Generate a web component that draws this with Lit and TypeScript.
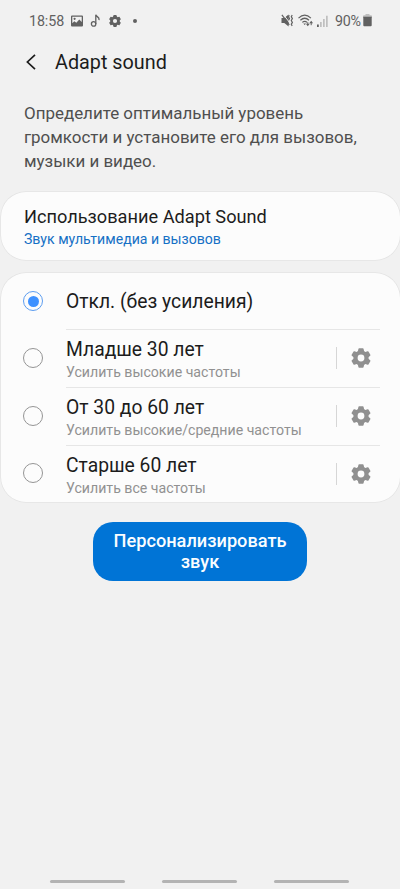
import { LitElement, html, css, svg, nothing } from "lit";
import { customElement, property, state } from "lit/decorators.js";
import { classMap } from "lit/directives/class-map.js";

const gear = () => svg`
  <circle r="5.5" fill="none" stroke="currentColor" stroke-width="4.2" />
  ${[0, 60, 120, 180, 240, 300].map(
    (a) => svg`<path
      transform="rotate(${a})"
      d="M-3.3-6L-2.6-9.1Q-2.5-9.7-1.9-9.7H1.9Q2.5-9.7 2.6-9.1L3.3-6z"
    />`
  )}
`;

@customElement("status-bar")
class StatusBar extends LitElement {
  static styles = css`
    :host {
      display: flex;
      justify-content: space-between;
      height: 41px;
      padding: 0 28px 0 29px;
      box-sizing: border-box;
      align-items: center;
      color: #616161;
      font-size: 14.3px;
    }
    .side {
      display: flex;
      align-items: center;
      height: 20px;
    }
    .time {
      width: 42px;
      letter-spacing: -0.1px;
    }
    svg {
      display: block;
      fill: currentColor;
    }
    .percent {
      margin-left: 7px;
      width: 28px;
      white-space: nowrap;
      letter-spacing: -0.3px;
    }
    .dot {
      width: 4px;
      height: 4px;
      border-radius: 50%;
      background: currentColor;
      margin-left: 11px;
    }
    .note {
      margin-left: 7px;
    }
    .gear {
      margin-left: 6px;
    }
    .wifi {
      margin-left: 4px;
    }
    .signal {
      margin-left: 3px;
    }
  `;

  render() {
    return html`
      <div class="side">
        <span class="time">18:58</span>
        <svg width="12" height="12" viewBox="0 0 12 12">
          <path
            fill-rule="evenodd"
            d="M1 .5h10a1 1 0 0 1 1 1v9a1 1 0 0 1-1 1H1a1 1 0 0 1-1-1v-9a1 1 0 0 1 1-1zM1.3 1.8v6.4l2-2 2 1.5 3-3.2 2.4 2.6V1.8zM3.6 2.7a1.1 1.1 0 1 1 0 2.2 1.1 1.1 0 0 1 0-2.2z"
          />
        </svg>
        <svg class="note" width="12" height="13" viewBox="0 0 12 13">
          <g fill="none" stroke="currentColor" stroke-width="1.3">
            <circle cx="3.6" cy="9.9" r="2.2" />
            <path d="M5.8 9.9V.7c.3 2.3 3.8 1.8 3.3 5.4" />
          </g>
        </svg>
        <svg class="gear" width="14" height="14" viewBox="-11.4 -11.4 22.8 22.8">
          ${gear()}
        </svg>
        <span class="dot"></span>
      </div>
      <div class="side">
        <svg width="13" height="13" viewBox="0 0 13 13">
          <path d="M.5 4h2.8L7.6.4v12L3.3 9H.5z" />
          <path d="M2.2.4l7 8.9" stroke="#f1f1f1" stroke-width="1" />
          <g fill="none" stroke="currentColor" stroke-width="1.2">
            <path d="M.9.9l7.4 10" />
            <path d="M8.3 1.2l-.8 1.6 1 1.7-.9 1.6M11.2.9l-.9 1.8 1.1 1.9-1.1 1.9 1.1 1.9-1.1 1.9.9 1.6" />
          </g>
        </svg>
        <svg class="wifi" width="16" height="13" viewBox="0 0 16 13">
          <g fill="none" stroke="currentColor" stroke-width="1.2">
            <path d="M.5 4.1Q6.7-1.8 12.9 4.1M2.4 6.3Q6.7 2.2 11 6.3M4.3 8.4Q6.7 6.2 9.1 8.4" />
            <path stroke-width="1" d="M9.8 8.2v3M13.2 11.2V7.9" />
          </g>
          <path d="M5.3 9.4h2.8l-1.4 1.7zM7.9 9.8h3.8l-1.9 2.4zM11.3 9.2h3.8l-1.9-2.4z" />
        </svg>
        <svg class="signal" width="11" height="12" viewBox="0 0 11 12">
          <path d="M0 9.5h1.8V12H0z" />
          <path opacity=".35" d="M3 7h1.7v5H3zM6 4h1.7v8H6zM9 .8h1.7V12H9z" />
        </svg>
        <span class="percent">90%</span>
        <svg width="9" height="13" viewBox="0 0 9 13">
          <path opacity=".35" d="M2.5 0h4v1.3H8a1 1 0 0 1 1 1V4H0V2.3a1 1 0 0 1 1-1h1.5z" />
          <path d="M.3 2.7h8.4v8.6a.9.9 0 0 1-.9.9H1.2a.9.9 0 0 1-.9-.9z" />
        </svg>
      </div>
    `;
  }
}

@customElement("sound-option")
class SoundOption extends LitElement {
  static styles = css`
    :host {
      display: flex;
      align-items: center;
      height: 57.8px;
      padding: 0 19.5px 0 22.5px;
      box-sizing: border-box;
    }
    :host([plain]) {
      height: 56px;
    }
    .radio {
      width: 20px;
      height: 20px;
      box-sizing: border-box;
      border: 1px solid #959595;
      border-radius: 50%;
      display: grid;
      place-items: center;
      flex: none;
    }
    .radio.on {
      border-color: #5c9df0;
    }
    .radio.on::after {
      content: "";
      width: 11px;
      height: 11px;
      border-radius: 50%;
      background: #3e91ff;
    }
    .body {
      flex: 1;
      height: 100%;
      margin-left: 23px;
      display: flex;
      align-items: center;
      border-top: 1px solid #e6e6e6;
      box-sizing: border-box;
    }
    :host([plain]) .body {
      border-top-color: transparent;
    }
    .text {
      flex: 1;
      white-space: nowrap;
      padding-top: 4px;
    }
    :host([plain]) .text {
      padding-top: 1px;
    }
    .title {
      font-size: 19.3px;
      line-height: 24px;
      color: #1c1c1c;
    }
    .hint {
      font-size: 14.15px;
      line-height: 20px;
      color: #919191;
    }
    .bar {
      width: 1px;
      height: 22px;
      background: #d6d6d6;
    }
    svg {
      margin: 0 7.5px 0 12px;
      color: #909090;
      fill: currentColor;
    }
  `;

  @property() label = "";
  @property() hint = "";
  @property({ type: Boolean }) checked = false;

  render() {
    return html`
      <span class=${classMap({ radio: true, on: this.checked })}></span>
      <div class="body">
        <div class="text">
          <div class="title">${this.label}</div>
          ${this.hint ? html`<div class="hint">${this.hint}</div>` : nothing}
        </div>
        ${this.hint
          ? html`<span class="bar"></span>
              <svg width="24" height="24" viewBox="-12 -12 24 24">${gear()}</svg>`
          : nothing}
      </div>
    `;
  }
}

@customElement("app-root")
class AppRoot extends LitElement {
  static styles = css`
    :host {
      display: flex;
      flex-direction: column;
      height: 889px;
      overflow: hidden;
      background: #f1f1f1;
      font-family: Roboto, "Noto Sans", sans-serif;
      color: #1c1c1c;
    }
    header {
      display: flex;
      align-items: center;
      height: 42px;
      padding-left: 25px;
    }
    .back {
      fill: none;
      stroke: #1c1c1c;
      stroke-width: 1.7;
    }
    h1 {
      margin: 0 0 0 18px;
      font-size: 19.8px;
      font-weight: 400;
    }
    .intro {
      margin: 18px 24px 0;
      height: 91px;
      font-size: 16.95px;
      line-height: 24.2px;
      color: #4f4f4f;
      white-space: pre-line;
    }
    .card {
      margin: 0 0.5px;
      background: #fcfcfc;
      border-radius: 25px;
      box-shadow: 0 0 0 0.7px #e3e3e3;
    }
    .usage {
      height: 68px;
      padding: 13px 23.5px 0;
      box-sizing: border-box;
    }
    .usage-title {
      font-size: 18.2px;
      line-height: 24px;
    }
    .usage-value {
      font-size: 14.1px;
      line-height: 20px;
      color: #1570c5;
    }
    .options {
      margin-top: 13px;
      height: 229px;
    }
    .action {
      align-self: center;
      margin-top: 20px;
      width: 214px;
      height: 59px;
      border: 0;
      border-radius: 20px;
      background: #0074d6;
      color: #fafdff;
      font: 500 18.2px/21px Roboto, "Noto Sans", sans-serif;
      padding: 0 0 1px;
    }
    nav {
      margin-top: auto;
      display: flex;
      justify-content: center;
      gap: 37px;
      padding: 0 1px 6px 0;
    }
    nav span {
      width: 75px;
      height: 3px;
      border-radius: 2px;
      background: #b3b3b3;
    }
  `;

  @state() private selected = 0;

  private options = [
    { label: "Откл. (без усиления)", hint: "" },
    { label: "Младше 30 лет", hint: "Усилить высокие частоты" },
    { label: "От 30 до 60 лет", hint: "Усилить высокие/средние частоты" },
    { label: "Старше 60 лет", hint: "Усилить все частоты" },
  ];

  render() {
    return html`
      <status-bar></status-bar>
      <header>
        <svg class="back" width="12" height="16" viewBox="0 0 12 16">
          <path d="M10 .9L2.4 8l7.6 7.1" />
        </svg>
        <h1>Adapt sound</h1>
      </header>
      <div class="intro">Определите оптимальный уровень
громкости и установите его для вызовов,
музыки и видео.</div>
      <section class="card usage">
        <div class="usage-title">Использование Adapt Sound</div>
        <div class="usage-value">Звук мультимедиа и вызовов</div>
      </section>
      <section class="card options">
        ${this.options.map(
          (o, i) => html`<sound-option
            ?plain=${!o.hint}
            .label=${o.label}
            .hint=${o.hint}
            .checked=${i === this.selected}
            @click=${() => (this.selected = i)}
          ></sound-option>`
        )}
      </section>
      <button class="action">Персонализировать<br />звук</button>
      <nav><span></span><span></span><span></span></nav>
    `;
  }
}
